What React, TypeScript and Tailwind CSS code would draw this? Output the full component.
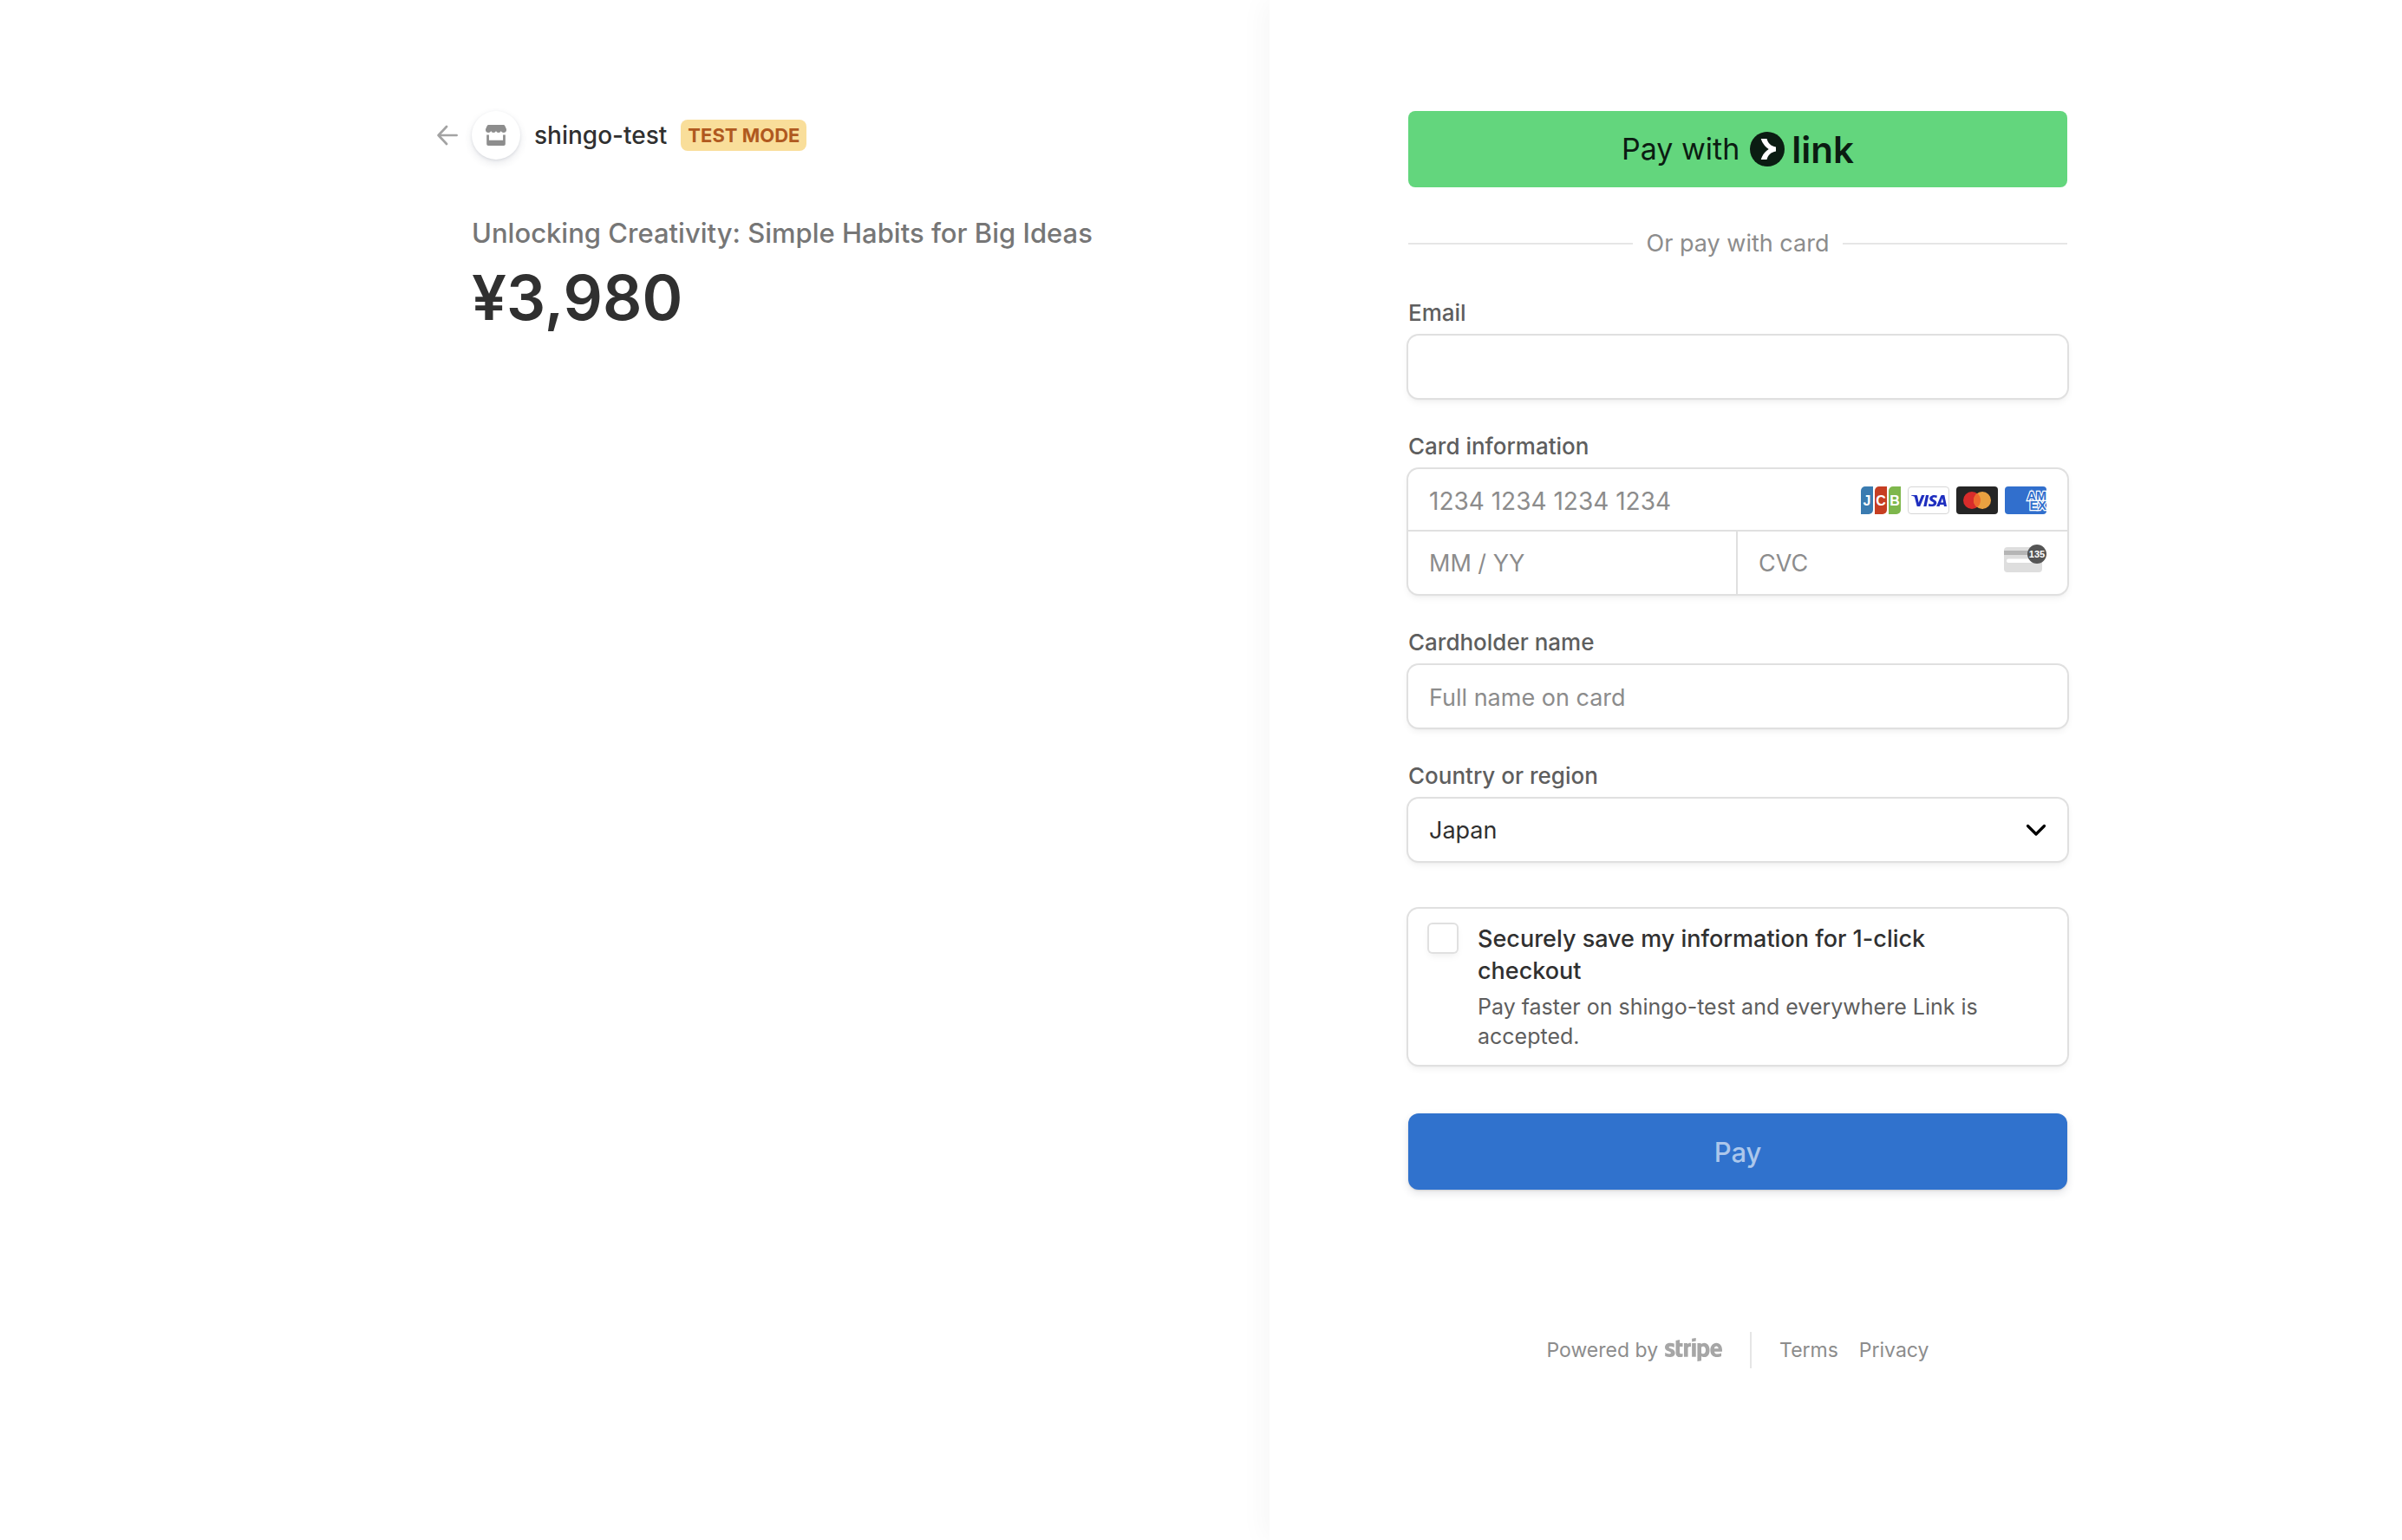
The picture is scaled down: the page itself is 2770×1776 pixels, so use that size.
import type { ReactNode } from 'react';
import { FaStripe } from 'react-icons/fa';
import { SiVisa } from 'react-icons/si';

const fieldShadow =
  'rounded-xl bg-white shadow-[0_0_0_2px_#e0e0e0,0_4px_8px_rgba(0,0,0,0.07),0_2px_3px_rgba(0,0,0,0.05)]';
const inputText =
  'w-full min-w-0 bg-transparent pt-0.5 leading-9 text-[#303030] outline-none placeholder:text-[#8c8c8c]';

function BackArrow() {
  return (
    <svg width="24" height="24" viewBox="0 0 24 24" fill="none" stroke="#a3a3a3" strokeWidth="2.7" strokeLinecap="round" strokeLinejoin="round" aria-hidden="true">
      <path d="M22.6 12H1.8M11 2 1.6 12 11 22" />
    </svg>
  );
}

function StoreIcon() {
  return (
    <svg width="24" height="24" viewBox="0 0 24 24" fill="#8d8d8d" aria-hidden="true">
      <path d="M3.4 0h17.2c.8 0 1.3.3 1.6 1l1.6 3.6c.2.5.2.9.2 1.4C24 7.9 22.4 9 20.7 9c-1.4 0-2.4-.8-2.9-2-.5 1.200-1.500 2-2.900 2s-2.400-.8-2.900-2c-.5 1.200-1.500 2-2.900 2s-2.400-.8-2.900-2C5.700 8.200 4.700 9 3.300 9 1.600 9 0 7.900 0 6c0-.5 0-.9.2-1.400L1.800 1C2.100.3 2.600 0 3.400 0Z" />
      <path d="M1.200 11.400c1 .2 1.800.2 2.700 0v6.400h16.200v-6.400c.9.2 1.700.2 2.700 0V22c0 1.200-.7 2-1.900 2H3.100c-1.200 0-1.900-.8-1.900-2Z" />
    </svg>
  );
}

function LinkLogo() {
  return (
    <span className="flex items-center gap-2">
      <svg width="40" height="40" viewBox="0 0 40 40" aria-hidden="true">
        <circle cx="20" cy="20" r="20" fill="#0b1c12" />
        <path fill="#fff" d="M12.700 8h6.800c1.300 5 4.800 8.600 10.500 9.500v5c-5.700.9-9.200 4.500-10.500 9.500h-6.800c1.600-5.200 4.800-9.400 9-12-4.200-2.600-7.400-6.800-9-12Z" />
      </svg>
      <span className="pt-0.5 text-[42px] leading-10 font-semibold">link</span>
    </span>
  );
}

function JcbIcon() {
  return (
    <svg width="48" height="32" viewBox="0 0 48 32" role="img" aria-label="JCB">
      <path fill="#3a7bb0" d="M2 5a5 5 0 0 1 5-5h9v27a5 5 0 0 1-5 5H2Z" />
      <path fill="#c63e22" d="M18 5a5 5 0 0 1 5-5h9v27a5 5 0 0 1-5 5h-9Z" />
      <path fill="#7eb74c" d="M34 5a5 5 0 0 1 5-5h9v27a5 5 0 0 1-5 5h-9Z" />
      <g fill="#fff" fontFamily="Liberation Sans, sans-serif" fontWeight="700" fontSize="16" textAnchor="middle">
        <text x="9" y="21.500">J</text>
        <text x="25" y="21.500">C</text>
        <text x="41" y="21.500">B</text>
      </g>
    </svg>
  );
}

function VisaIcon() {
  return (
    <span className="flex h-8 w-12 items-center justify-center rounded border border-[#d6d6d6] bg-white">
      <SiVisa className="size-[41px] text-[#1f2fbf]" role="img" aria-label="Visa" />
    </span>
  );
}

function MastercardIcon() {
  return (
    <svg width="48" height="32" viewBox="0 0 48 32" role="img" aria-label="Mastercard">
      <rect width="48" height="32" rx="4" fill="#252525" />
      <circle cx="18" cy="16" r="10" fill="#d92c2b" />
      <circle cx="30" cy="16" r="10" fill="#e9a140" />
      <path fill="#ee6a2d" d="M24 8a10 10 0 0 1 0 16 10 10 0 0 1 0-16Z" />
    </svg>
  );
}

function AmexIcon() {
  return (
    <svg width="48" height="32" viewBox="0 0 48 32" role="img" aria-label="American Express">
      <clipPath id="amex-card">
        <rect width="48" height="32" rx="4" />
      </clipPath>
      <g clipPath="url(#amex-card)">
        <rect width="48" height="32" fill="#316fcd" />
        <g fill="#316fcd" stroke="#fff" strokeWidth="2.400" paintOrder="stroke" fontFamily="Liberation Sans, sans-serif" fontWeight="700" fontSize="14.500">
          <text x="25.500" y="15.500">AM</text>
          <text x="28.500" y="26.500">EX</text>
        </g>
      </g>
    </svg>
  );
}

function CvcIcon() {
  return (
    <svg width="49" height="32" viewBox="0 0 49 32" aria-hidden="true">
      <rect y="3" width="44" height="29" rx="4" fill="#dedede" />
      <rect y="7" width="44" height="5" fill="#b5b5b5" />
      <rect x="3" y="16.500" width="36" height="4.500" rx="2" fill="#fff" />
      <circle cx="38" cy="11" r="11" fill="#555" />
      <text x="38" y="15" fill="#fff" fontFamily="Liberation Sans, sans-serif" fontWeight="700" fontSize="11" textAnchor="middle">135</text>
    </svg>
  );
}

function Field({ id, label, children }: { id: string; label: string; children: ReactNode }) {
  return (
    <div className="flex flex-col gap-2.5">
      <label htmlFor={id} className="self-start text-[26px] leading-8 font-medium text-[#5e5e5e]">
        {label}
      </label>
      {children}
    </div>
  );
}

function Summary() {
  return (
    <section className="flex justify-end bg-white pt-32 pr-40">
      <div className="w-full max-w-[760px]">
        <header className="-ml-10 flex items-center">
          <a href="#back" aria-label="Back" className="mr-4">
            <BackArrow />
          </a>
          <span className="flex size-14 items-center justify-center rounded-full bg-white shadow-[0_4px_10px_rgba(60,66,87,0.12),0_1px_3px_rgba(60,66,87,0.12)]">
            <StoreIcon />
          </span>
          <span className="ml-4 text-[28px] leading-9 font-medium text-[#303030]">shingo-test</span>
          <span className="ml-4 rounded-lg bg-[#f9de9a] px-2 text-[22px] leading-9 font-bold text-[#b0591f]">TEST MODE</span>
        </header>
        <h1 className="mt-16 text-[31px] leading-[42px] font-medium text-[#767676]">
          Unlocking Creativity: Simple Habits for Big Ideas
        </h1>
        <p className="mt-2 text-[71px] leading-[90px] font-semibold text-[#303030]">¥3,980</p>
      </div>
    </section>
  );
}

function PaymentForm() {
  return (
    <main className="bg-white px-40 pt-32 shadow-[-6px_0_30px_rgba(0,0,0,0.04)]">
      <form className="w-full max-w-[760px]" onSubmit={(e) => e.preventDefault()}>
        <button type="button" className="flex h-[88px] w-full items-center justify-center gap-3 rounded-lg bg-[#63d67d] text-[#0b1c12]">
          <span className="text-[34px] leading-10">Pay with</span>
          <LinkLogo />
        </button>

        <div className="mt-[45px] flex items-center gap-4">
          <span className="h-0.5 flex-1 bg-[#e6e6e6]" />
          <span className="text-[27px] leading-10 text-[#8c8c8c]">Or pay with card</span>
          <span className="h-0.5 flex-1 bg-[#e6e6e6]" />
        </div>

        <div className="mt-11 flex flex-col gap-10">
          <Field id="email" label="Email">
            <div className={fieldShadow}>
              <input id="email" type="email" className={`${inputText} block h-[72px] px-6 text-[27px]`} />
            </div>
          </Field>

          <Field id="card-number" label="Card information">
            <div className={fieldShadow}>
              <div className="flex h-[70px] items-center gap-2 px-6 pt-0.5">
                <input id="card-number" inputMode="numeric" placeholder="1234 1234 1234 1234" className={`${inputText} text-[28px]`} />
                <div className="flex shrink-0 gap-2">
                  <JcbIcon />
                  <VisaIcon />
                  <MastercardIcon />
                  <AmexIcon />
                </div>
              </div>
              <div className="grid h-[74px] grid-cols-2 border-t-2 border-[#e0e0e0]">
                <input aria-label="Expiration date" placeholder="MM / YY" className={`${inputText} border-r-2 border-[#e0e0e0] px-6 text-[27px]`} />
                <div className="flex items-center px-6">
                  <input aria-label="Security code" placeholder="CVC" className={`${inputText} text-[27px]`} />
                  <span className="mb-2.5 shrink-0">
                    <CvcIcon />
                  </span>
                </div>
              </div>
            </div>
          </Field>

          <Field id="name" label="Cardholder name">
            <div className={fieldShadow}>
              <input id="name" placeholder="Full name on card" className={`${inputText} block h-[72px] px-6 text-[27px]`} />
            </div>
          </Field>

          <Field id="country" label="Country or region">
            <div className={`${fieldShadow} relative`}>
              <select id="country" defaultValue="JP" className={`${inputText} block h-[72px] appearance-none px-6 text-[27px]`}>
                <option value="JP">Japan</option>
              </select>
              <svg className="pointer-events-none absolute top-1/2 right-6 -translate-y-1/2" width="24" height="24" viewBox="0 0 24 24" fill="none" stroke="#000" strokeWidth="3.200" strokeLinecap="round" strokeLinejoin="round" aria-hidden="true">
                <path d="m2.500 7.500 9.500 9.500 9.500-9.500" />
              </svg>
            </div>
          </Field>
        </div>

        <div className={`${fieldShadow} mt-[55px] flex gap-6 px-6 py-4`}>
          <input
            id="save"
            type="checkbox"
            className="mt-0.5 size-8 shrink-0 appearance-none rounded bg-white shadow-[0_0_0_2px_#e0e0e0,0_4px_8px_rgba(0,0,0,0.07)]"
          />
          <div className="pr-6">
            <label htmlFor="save" className="block text-[27px] leading-[37px] font-medium text-[#303030]">
              Securely save my information for 1-click checkout
            </label>
            <p className="mt-1.5 text-[25px] leading-[34px] text-[#5e5e5e]">
              Pay faster on shingo-test and everywhere Link is accepted.
            </p>
          </div>
        </div>

        <button
          type="submit"
          className="mt-14 h-[88px] w-full rounded-xl bg-[#3072cd] pt-0.5 text-[31px] leading-10 font-medium text-[#acc7eb] shadow-[0_4px_10px_rgba(60,66,87,0.14),0_1px_2px_rgba(0,0,0,0.12)]"
        >
          Pay
        </button>
      </form>

      <footer className="mt-[158px] flex w-full max-w-[760px] items-center justify-center text-[23px] leading-[42px] text-[#8c8c8c]">
        <a href="#stripe" className="flex items-center gap-2">
          Powered by
          <FaStripe className="h-[53px] w-[66px] text-[#a6a6a6]" role="img" aria-label="Stripe" />
        </a>
        <span className="mx-8 h-[42px] w-0.5 bg-[#e6e6e6]" />
        <a href="#terms" className="mr-6">Terms</a>
        <a href="#privacy">Privacy</a>
      </footer>
    </main>
  );
}

export default function App() {
  return (
    <div className="grid min-h-screen grid-cols-[1464fr_1306fr] font-['Inter',sans-serif]">
      <Summary />
      <PaymentForm />
    </div>
  );
}
